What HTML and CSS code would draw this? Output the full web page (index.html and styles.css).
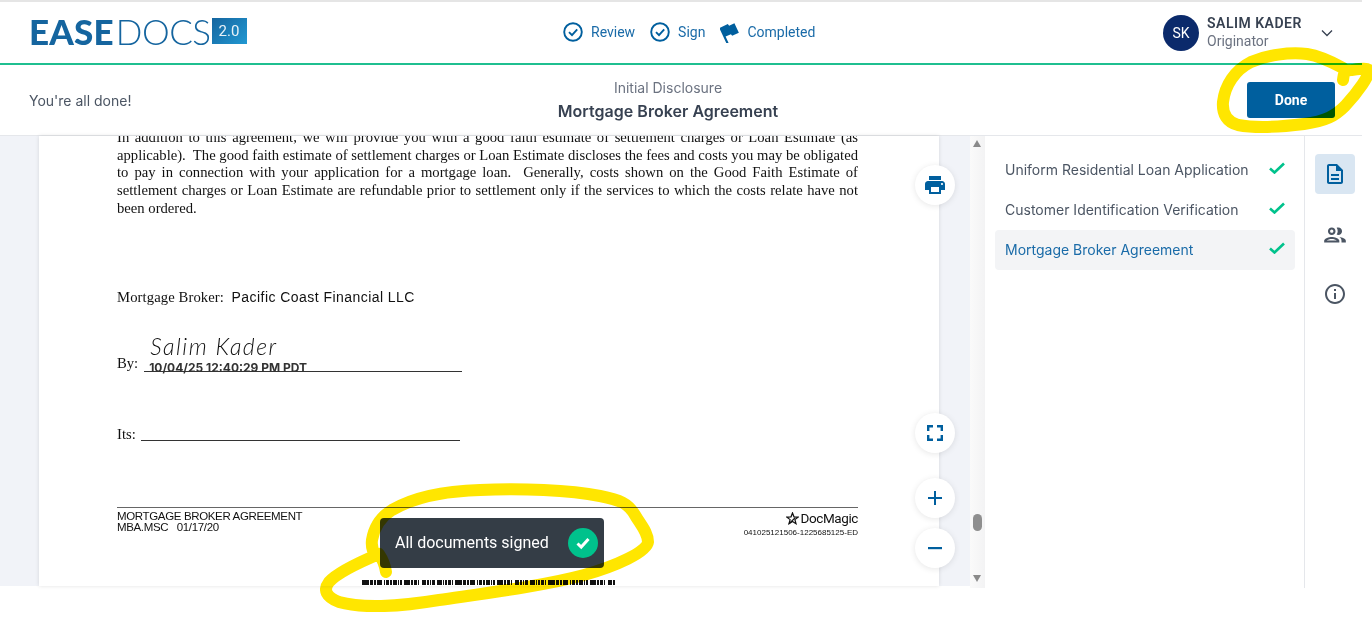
FILE: index.html
```html
<!DOCTYPE html>
<html lang="en">
<head>
    <meta charset="UTF-8">
    <meta name="viewport" content="width=device-width, initial-scale=1.0">
    <title>EaseDocs - Mortgage Broker Agreement</title>
    <link rel="stylesheet" href="styles.css">
</head>
<body>
    <div class="app">
        <header class="topbar">
            <div class="logo">
                <span class="logo-bold">EASE</span><span class="logo-thin">DOCS</span><span class="logo-badge">2.0</span>
            </div>
            <nav class="steps">
                <span class="step">
                    <svg class="step-icon" viewBox="0 0 20 20"><circle cx="10" cy="10" r="8.8"/><path d="M6 10.2l3 3 5.2-5.8"/></svg>
                    Review
                </span>
                <span class="step">
                    <svg class="step-icon" viewBox="0 0 20 20"><circle cx="10" cy="10" r="8.8"/><path d="M6 10.2l3 3 5.2-5.8"/></svg>
                    Sign
                </span>
                <span class="step step-last">
                    <svg class="step-flag" viewBox="3 2 19 20"><path transform="rotate(-25 12 12)" d="M14.4 6L14 4H5v17h2v-7h5.6l.4 2h7V6z"/></svg>
                    Completed
                </span>
            </nav>
            <div class="user">
                <span class="avatar">SK</span>
                <div class="user-text">
                    <div class="user-name">SALIM KADER</div>
                    <div class="user-role">Originator</div>
                </div>
                <svg class="chevron" viewBox="0 0 12 8"><path d="M1 1.5l5 5 5-5"/></svg>
            </div>
        </header>

        <section class="subbar">
            <div class="subbar-note">You're all done!</div>
            <div class="subbar-title">
                <div class="subbar-pack">Initial Disclosure</div>
                <div class="subbar-doc">Mortgage Broker Agreement</div>
            </div>
            <button class="done-btn">Done</button>
        </section>

        <main class="main">
            <div class="viewer">
                <article class="page">
                    <div class="para">
                        <div class="jline">In addition to this agreement, we will provide you with a good faith estimate of settlement charges or Loan Estimate (as</div>
                        <div class="jline">applicable).&nbsp; The good faith estimate of settlement charges or Loan Estimate discloses the fees and costs you may be obligated</div>
                        <div class="jline">to pay in connection with your application for a mortgage loan.&nbsp; Generally, costs shown on the Good Faith Estimate of</div>
                        <div class="jline">settlement charges or Loan Estimate are refundable prior to settlement only if the services to which the costs relate have not</div>
                        <div>been ordered.</div>
                    </div>
                    <div class="broker">Mortgage Broker:&nbsp; <span class="broker-name">Pacific Coast Financial LLC</span></div>
                    <div class="sign-row">
                        <span>By:</span>
                        <span class="sign-line">
                            <span class="signature">Salim Kader</span>
                            <span class="sign-stamp">10/04/25 12:40:29 PM PDT</span>
                        </span>
                    </div>
                    <div class="its-row">
                        <span>Its:</span>
                        <span class="its-line"></span>
                    </div>
                    <footer class="page-foot">
                        <div class="foot-left">
                            <div>MORTGAGE BROKER AGREEMENT</div>
                            <div>MBA.MSC &nbsp; 01/17/20</div>
                        </div>
                        <div class="foot-right">
                            <div class="docmagic">
                                <svg class="star" viewBox="0 0 14 14"><path d="M7 1l1.6 4.2L13 5.5 9.6 8.2l1.2 4.4L7 10.2l-3.8 2.4 1.2-4.4L1 5.5l4.4-.3z"/><path d="M3.2 12.6L10 6"/></svg>
                                <span>DocMagic</span>
                            </div>
                            <div class="doc-code">041025121506-1225685125-ED</div>
                        </div>
                    </footer>
                    <svg class="barcode" viewBox="0 0 254 5"><path d="M0 2.5h254" stroke-dasharray="7 1 3 1 2 1 5 2 1 1 3 1 2 1 4 1 1 1 2 2 6 1 2 1 3 1 1 3 4 1 2 1 1 1 3 2 5 1 1 1 2 1 3 1 1 2"/></svg>
                </article>

                <button class="fab fab-print">
                    <svg viewBox="0 0 24 24"><path d="M19 8H5c-1.66 0-3 1.34-3 3v6h4v4h12v-4h4v-6c0-1.66-1.34-3-3-3zm-3 11H8v-5h8v5zm3-7c-.55 0-1-.45-1-1s.45-1 1-1 1 .45 1 1-.45 1-1 1zm-1-9H6v4h12V3z"/></svg>
                </button>
                <button class="fab fab-full">
                    <svg viewBox="0 0 24 24"><path d="M4 4h6v2.400H6.400V10H4zM14 4h6v6h-2.400V6.400H14zM4 14h2.400v3.600H10V20H4zM17.600 14H20v6h-6v-2.400h3.600z"/></svg>
                </button>
                <button class="fab fab-plus">
                    <svg viewBox="0 0 24 24"><path d="M11 5h2v6h6v2h-6v6h-2v-6H5v-2h6z"/></svg>
                </button>
                <button class="fab fab-minus">
                    <svg viewBox="0 0 24 24"><path d="M5 11h14v2.200H5z"/></svg>
                </button>

                <div class="toast">
                    <span class="toast-text">All documents signed</span>
                    <span class="toast-check">
                        <svg viewBox="0 0 20 20"><path d="M4.500 10.500l3.700 3.500 7.300-8"/></svg>
                    </span>
                </div>
            </div>

            <div class="scrollbar">
                <span class="arrow-up"></span>
                <span class="thumb"></span>
                <span class="arrow-down"></span>
            </div>

            <aside class="doclist">
                <div class="doc-item"><span>Uniform Residential Loan Application</span><svg class="tick" viewBox="0 0 16 12"><path d="M1 6.500l4.500 4L15 1.500"/></svg></div>
                <div class="doc-item"><span>Customer Identification Verification</span><svg class="tick" viewBox="0 0 16 12"><path d="M1 6.500l4.500 4L15 1.500"/></svg></div>
                <div class="doc-item doc-item-active"><span>Mortgage Broker Agreement</span><svg class="tick" viewBox="0 0 16 12"><path d="M1 6.500l4.500 4L15 1.500"/></svg></div>
            </aside>

            <div class="rail">
                <span class="rail-btn rail-btn-active">
                    <svg viewBox="0 0 24 24"><path d="M8 16h8v2H8zm0-4h8v2H8zm6-10H6c-1.100 0-2 .9-2 2v16c0 1.100.89 2 1.990 2H18c1.100 0 2-.9 2-2V8l-6-6zm4 18H6V4h7v5h5v11z"/></svg>
                </span>
                <span class="rail-btn rail-btn-people">
                    <svg viewBox="0 0 24 24"><path d="M9 13.750c-2.340 0-7 1.170-7 3.500V19h14v-1.750c0-2.330-4.660-3.500-7-3.500zM4.340 17c.84-.58 2.870-1.250 4.660-1.250s3.820.67 4.660 1.250H4.340zM9 12c1.930 0 3.500-1.570 3.500-3.500S10.930 5 9 5 5.500 6.570 5.500 8.500 7.070 12 9 12zm0-5c.83 0 1.500.67 1.500 1.500S9.830 10 9 10s-1.500-.67-1.500-1.500S8.170 7 9 7zm7.040 6.810c1.160.84 1.960 1.960 1.960 3.440V19h4v-1.750c0-2.020-3.500-3.170-5.960-3.440zM15 12c1.930 0 3.500-1.570 3.500-3.500S16.930 5 15 5c-.54 0-1.040.13-1.500.35.63.89 1 1.980 1 3.150s-.37 2.260-1 3.150c.46.22.96.35 1.500.35z"/></svg>
                </span>
                <span class="rail-btn">
                    <svg viewBox="0 0 24 24"><path d="M11 7h2v2h-2zm0 4h2v6h-2zm1-9C6.480 2 2 6.480 2 12s4.480 10 10 10 10-4.480 10-10S17.520 2 12 2zm0 18c-4.410 0-8-3.590-8-8s3.590-8 8-8 8 3.590 8 8-3.590 8-8 8z"/></svg>
                </span>
            </div>
        </main>
    </div>

    <!-- marker scribbles someone drew on top of the screenshot -->
    <svg class="scribble" viewBox="0 0 1372 617">
        <path d="M1343 80C1344 74 1343 70 1352 70C1360 69 1367 68 1369 70C1370 75 1358 92 1345 106C1335 116 1326 121 1304 124C1280 127 1254 128 1238 125C1227 122 1222 114 1223 102C1225 85 1235 70 1251 62C1267 55 1289 52 1307 54C1320 56 1332 62 1343 68"/>
        <path d="M386 572C385 565 383 560 379 554C360 562 338 572 329 582C323 590 326 597 339 602C360 608 397 607 439 600C487 593 543 586 584 575C616 566 647 552 648 542C648 532 640 524 635 515C628 503 620 500 600 496C570 490 520 488 480 490C446 491 416 496 392 510C379 518 374 528 372 540C371 548 373 552 376 556"/>
    </svg>
</body>
</html>
```

FILE: styles.css
```css
* {
    box-sizing: border-box;
}
body {
    margin: 0;
    background: #fff;
    font-family: Inter, Arial, sans-serif;
    color: #374151;
    height: 617px;
    overflow: hidden;
    position: relative;
}
svg {
    display: block;
}
button {
    border: none;
    padding: 0;
    cursor: pointer;
}
.app {
    width: 1362px;
    border-top: 2px solid #e5e5e5;
}

/* top bar */
.topbar {
    height: 63px;
    border-bottom: 2px solid #1fbf90;
    display: grid;
    grid-template-columns: 563px 600px 1fr;
    align-items: center;
}
.logo {
    display: flex;
    align-items: center;
    padding-left: 29px;
    margin-top: -3px;
    font-family: Lato, Arial, sans-serif;
    font-size: 35px;
    line-height: 28px;
    color: #15659f;
}
.logo-bold {
    font-weight: 900;
    letter-spacing: 0.2px;
}
.logo-thin {
    font-weight: 300;
    letter-spacing: -0.5px;
    margin-left: 2px;
}
.logo-badge {
    width: 35px;
    height: 26px;
    margin-left: 1px;
    background: linear-gradient(135deg, #15659f, #2198d2);
    color: #e8f2f8;
    font-family: Roboto, Arial, sans-serif;
    font-size: 15px;
    line-height: 26px;
    text-align: center;
}
.steps {
    display: flex;
    align-items: center;
    font-family: Roboto, Arial, sans-serif;
    font-size: 14px;
    line-height: 18px;
    color: #1a6ba8;
    margin-top: -1px;
}
.step {
    display: flex;
    align-items: center;
    gap: 8px;
    margin-right: 15px;
}
.step-last {
    gap: 7px;
}
.step-icon {
    width: 20px;
    height: 20px;
    fill: none;
    stroke: #005f9e;
    stroke-width: 1.9;
}
.step-flag {
    width: 20px;
    height: 21px;
    fill: #005f9e;
}
.user {
    display: flex;
    align-items: center;
    font-family: Roboto, Arial, sans-serif;
}
.avatar {
    width: 36px;
    height: 36px;
    border-radius: 50%;
    background: #0b2a6b;
    color: #fff;
    font-size: 14px;
    line-height: 36px;
    text-align: center;
}
.user-text {
    margin-left: 8px;
    width: 114px;
    font-size: 14px;
    line-height: 18px;
    margin-top: -2px;
}
.user-name {
    font-weight: 600;
    letter-spacing: 0.5px;
    color: #374151;
}
.user-role {
    color: #6b7280;
}
.chevron {
    width: 12px;
    height: 8px;
    fill: none;
    stroke: #374151;
    stroke-width: 1.3;
}

/* title row */
.subbar {
    height: 71px;
    border-bottom: 1px solid #e5e7eb;
    display: grid;
    grid-template-columns: 527px 282px 1fr;
    align-items: center;
}
.subbar-note {
    padding-left: 29px;
    font-size: 14px;
    color: #4b5563;
}
.subbar-title {
    text-align: center;
}
.subbar-pack {
    font-size: 14px;
    line-height: 18px;
    color: #6b7280;
    margin-bottom: 4px;
}
.subbar-doc {
    font-size: 16px;
    line-height: 20px;
    font-weight: 600;
    letter-spacing: 0.03px;
    color: #374151;
}
.done-btn {
    justify-self: end;
    margin-right: 27px;
    width: 88px;
    height: 36px;
    border-radius: 3px;
    background: #005f9e;
    color: #fff;
    font-family: Roboto, Arial, sans-serif;
    font-size: 14px;
    font-weight: 700;
}

/* main area */
.main {
    display: flex;
    height: 450px;
}
.viewer {
    width: 970px;
    background: #f1f3f8;
    padding-left: 39px;
    position: relative;
}
.page {
    width: 900px;
    height: 450px;
    background: #fff;
    padding-left: 78px;
    padding-right: 81px;
    overflow: hidden;
    box-shadow: 0 0 4px rgba(0, 0, 0, 0.12);
    font-family: "Liberation Serif", serif;
    font-size: 14.67px;
    line-height: 17.7px;
    color: #111;
}
.para {
    margin-top: -7px;
}
.jline {
    text-align: justify;
    text-align-last: justify;
}
.broker {
    margin-top: 71px;
    letter-spacing: 0.1px;
}
.broker-name {
    font-family: "Liberation Sans", sans-serif;
    font-size: 14px;
    letter-spacing: 0.45px;
}
.sign-row {
    display: flex;
    margin-top: 49px;
}
.sign-line {
    position: relative;
    width: 318px;
    height: 17px;
    margin-left: 6px;
    border-bottom: 1px solid #333;
}
.signature {
    position: absolute;
    left: 6px;
    top: -23px;
    font-family: Lato, sans-serif;
    font-weight: 300;
    font-style: italic;
    font-size: 23px;
    line-height: 28px;
    letter-spacing: 1.5px;
    white-space: nowrap;
}
.sign-stamp {
    position: absolute;
    left: 5px;
    top: 5px;
    font-family: Inter, sans-serif;
    font-weight: 700;
    font-size: 12px;
    line-height: 16px;
    white-space: nowrap;
    color: #333;
}
.its-row {
    display: flex;
    margin-top: 53px;
}
.its-line {
    width: 319px;
    height: 15px;
    margin-left: 5px;
    border-bottom: 1px solid #333;
}
.page-foot {
    display: flex;
    justify-content: space-between;
    margin-top: 63px;
    border-top: 1px solid #666;
    font-family: "Liberation Sans", sans-serif;
    height: 44px;
}
.foot-left {
    font-size: 11.5px;
    line-height: 11px;
    letter-spacing: -0.35px;
    padding-top: 3px;
}
.foot-right {
    text-align: right;
}
.docmagic {
    display: flex;
    justify-content: flex-end;
    align-items: center;
    gap: 2px;
    margin-top: 3px;
    font-family: Roboto, sans-serif;
    font-size: 13.5px;
    line-height: 15px;
    letter-spacing: -0.4px;
}
.star {
    width: 13px;
    height: 13px;
    fill: none;
    stroke: #111;
    stroke-width: 1.3;
}
.doc-code {
    font-size: 8px;
    line-height: 10px;
    margin-top: 2px;
}
.barcode {
    width: 254px;
    height: 5px;
    margin-left: 245px;
    margin-top: 29px;
    fill: none;
    stroke: #111;
    stroke-width: 5;
}

/* round buttons over the page */
.fab {
    position: absolute;
    left: 915px;
    width: 40px;
    height: 40px;
    border-radius: 50%;
    background: #fff;
    box-shadow: 0 1px 6px rgba(0, 0, 0, 0.1);
    display: flex;
    align-items: center;
    justify-content: center;
}
.fab svg {
    width: 24px;
    height: 24px;
    fill: #005f9e;
}
.fab-print {
    top: 29px;
}
.fab-full {
    top: 277px;
}
.fab-plus {
    top: 342px;
}
.fab-minus {
    top: 392px;
}
.toast {
    position: absolute;
    left: 380px;
    top: 382px;
    width: 224px;
    height: 50px;
    padding: 0 6px 0 15px;
    display: flex;
    align-items: center;
    justify-content: space-between;
    border-radius: 4px;
    background: #343d46;
    color: #fff;
    font-family: Roboto, Arial, sans-serif;
    font-size: 16px;
    line-height: 20px;
}
.toast-text {
    margin-top: -1px;
}
.toast-check {
    width: 30px;
    height: 30px;
    border-radius: 50%;
    background: #00c28c;
    display: flex;
    align-items: center;
    justify-content: center;
}
.toast-check svg {
    width: 20px;
    height: 20px;
    fill: none;
    stroke: #fff;
    stroke-width: 3;
}

/* scrollbar */
.scrollbar {
    width: 15px;
    height: 452px;
    background: linear-gradient(90deg, #fafafa, #f3f3f4);
    position: relative;
}
.arrow-up,
.arrow-down {
    position: absolute;
    left: 3px;
    width: 0;
    height: 0;
    border-left: 4.5px solid transparent;
    border-right: 4.5px solid transparent;
}
.arrow-up {
    top: 4px;
    border-bottom: 7px solid #8a8a8a;
}
.arrow-down {
    bottom: 6px;
    border-top: 7px solid #8a8a8a;
}
.thumb {
    position: absolute;
    left: 3px;
    top: 378px;
    width: 9px;
    height: 17px;
    border-radius: 4.5px;
    background: #8f8f8f;
}

/* document list */
.doclist {
    width: 320px;
    height: 452px;
    padding: 14px 9px 0 10px;
    border-right: 1px solid #e5e7eb;
}
.doc-item {
    height: 40px;
    padding: 0 10px;
    display: flex;
    align-items: center;
    justify-content: space-between;
    border-radius: 4px;
    font-size: 14px;
    line-height: 18px;
    color: #4b5563;
}
.doc-item span {
    margin-top: -1px;
}
.doc-item-active {
    background: #f3f4f6;
    color: #1a6ba8;
}
.tick {
    width: 16px;
    height: 12px;
    margin-top: -4px;
    fill: none;
    stroke: #00c28c;
    stroke-width: 2.6;
}

/* icon rail */
.rail {
    width: 57px;
    padding: 18px 0 0 10px;
    display: flex;
    flex-direction: column;
    gap: 20px;
}
.rail-btn {
    width: 40px;
    height: 40px;
    border-radius: 4px;
    display: flex;
    align-items: center;
    justify-content: center;
}
.rail-btn svg {
    width: 24px;
    height: 24px;
    fill: #4b5563;
}
.rail-btn-people svg {
    width: 26px;
    height: 26px;
    margin-top: 1px;
}
.rail-btn-active {
    background: #d9e6f2;
}
.rail-btn-active svg {
    fill: #005f9e;
}

.scribble {
    position: absolute;
    left: 0;
    top: 0;
    width: 1372px;
    height: 617px;
    fill: none;
    stroke: #ffe600;
    stroke-width: 12;
    stroke-linecap: round;
    stroke-linejoin: round;
    mix-blend-mode: multiply;
    pointer-events: none;
}
```
